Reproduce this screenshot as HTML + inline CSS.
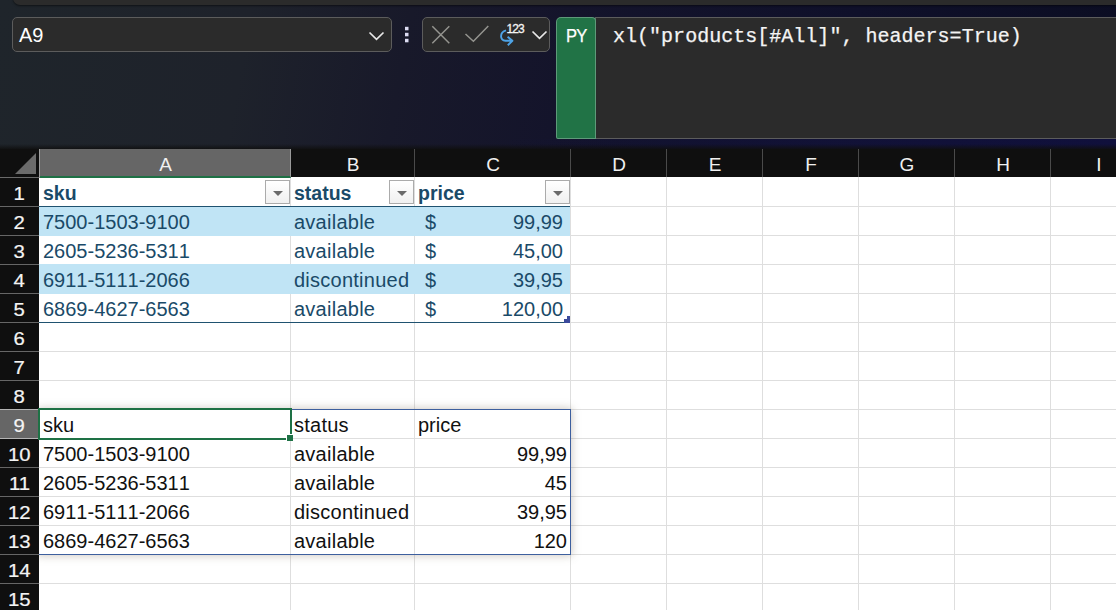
<!DOCTYPE html>
<html><head><meta charset="utf-8"><title>Excel</title>
<style>
html,body{margin:0;padding:0;}
body{width:1116px;height:610px;overflow:hidden;position:relative;background:#1a1c2a;font-family:"Liberation Sans",sans-serif;}
#bg{position:absolute;left:0;top:0;width:1116px;height:178px;background:linear-gradient(100deg,#1f252b 0%,#1e222b 22%,#18192a 36%,#14142b 50%,#0f102a 75%,#0b0d22 100%);}
#strip{position:absolute;left:0;top:139px;width:1116px;height:10px;background:linear-gradient(rgba(15,15,15,0) 50%,rgba(15,15,15,.85) 100%),linear-gradient(90deg,rgba(18,18,56,0) 0%,rgba(18,18,56,0) 45%,rgba(18,18,56,.9) 75%,#10103c 100%);}
#ribbon{position:absolute;left:13px;top:-20px;width:1200px;height:25px;background:#2b2b2b;border-radius:0 0 0 7px;box-shadow:0 1px 2px rgba(0,0,0,.5);}
.box{position:absolute;box-sizing:border-box;border:1px solid #5c5c5c;background:#2b2b2b;border-radius:5px;}
#namebox{left:12px;top:17px;width:380px;height:35px;}
#namebox span{position:absolute;left:6px;top:6px;font-size:20px;color:#fff;line-height:22px;}
#btns{left:422px;top:17px;width:128px;height:35px;}
#fx{left:595px;top:17px;width:600px;height:122px;border-radius:0;}
#py{position:absolute;box-sizing:border-box;left:556px;top:17px;width:40px;height:122px;background:#217346;border:1px solid rgba(255,255,255,.28);border-radius:5px 4px 0 2px;}
#py span{position:absolute;left:9px;top:7px;font-size:18px;color:#fff;line-height:22px;letter-spacing:-1px;transform:scaleX(.92);transform-origin:0 0;-webkit-text-stroke:0.25px #fff}
#code{position:absolute;left:17px;top:7px;font-family:"Liberation Mono",monospace;font-size:20px;line-height:24px;color:#f4f4f4;white-space:pre;letter-spacing:0.02px;-webkit-text-stroke:0.25px #f4f4f4}
svg{position:absolute;overflow:visible;}
#grid{position:absolute;left:39px;top:177px;width:1077px;height:433px;background:#fff;}
.hl{position:absolute;left:39px;width:1077px;height:1px;background:#dedede;}
.vl{position:absolute;top:177px;width:1px;height:433px;background:#dedede;}
#colhdr{position:absolute;left:0;top:149px;width:1116px;height:28px;background:#0f0f0f;}
.ch{position:absolute;top:149px;height:28px;box-sizing:border-box;padding-left:2px;border-right:1px solid #4a4a4a;color:#f0f0f0;font-size:19px;line-height:32px;text-align:center;}
#rowhdr{z-index:2;position:absolute;left:0;top:177px;width:39px;height:433px;background:#0f0f0f;}
.rh{z-index:2;position:absolute;left:0;width:39px;height:29px;box-sizing:border-box;border-bottom:1px solid #666;color:#f4f4f4;font-size:18.5px;line-height:31px;text-align:center;}
.rh span{display:inline-block;transform:scaleX(1.1);-webkit-text-stroke:0.2px #f4f4f4}
.c{font-kerning:none;position:absolute;height:29px;line-height:31px;font-size:20px;white-space:nowrap;color:#111;}
.t{color:#1a4a68;}
.b{font-weight:bold;font-size:19.5px;letter-spacing:0 !important}
.cb{letter-spacing:0.25px;}
.r{text-align:right;}
.band{position:absolute;left:39px;width:531px;height:29.5px;background:#c0e4f5;}
.fb{position:absolute;top:180px;width:25px;height:24px;box-sizing:border-box;border:1px solid #ababab;background:linear-gradient(#ffffff,#f0f0f0);}
.fb i{position:absolute;left:6.5px;top:9.5px;width:0;height:0;border-left:5px solid transparent;border-right:5px solid transparent;border-top:5px solid #6a6a6a;}
</style></head><body>
<div id="bg"></div>
<div id="ribbon"></div>
<div id="strip"></div>
<div class="box" id="namebox"><span>A9</span></div>
<div class="box" id="btns"></div>
<span style="position:absolute;left:506.5px;top:22px;font-size:12px;line-height:14px;color:#f4f4f4;letter-spacing:-0.9px;-webkit-text-stroke:0.3px #f4f4f4">123</span>
<svg style="left:0;top:0" width="600" height="60" viewBox="0 0 600 60">
<path d="M369.5 32.5 L376.5 39.3 L383.5 32.5" fill="none" stroke="#e8e8e8" stroke-width="1.7"/>
<rect x="405" y="26.8" width="3.5" height="3.5" fill="#dcdcf2"/><rect x="405" y="32.8" width="3.5" height="3.5" fill="#dcdcf2"/><rect x="405" y="38.8" width="3.5" height="3.5" fill="#dcdcf2"/>
<path d="M432.3 26.2 L449.3 43.2 M449.3 26.2 L432.3 43.2" fill="none" stroke="#94948f" stroke-width="1.5"/>
<path d="M465.5 34 L473.4 41.2 L488.3 26" fill="none" stroke="#94948f" stroke-width="1.5"/>
<path d="M506 30.3 C499.5 32 499.5 40.8 505.5 40.8 L512 40.8 M507.6 36.8 L512.4 40.8 L507.8 45.2" fill="none" stroke="#4ea3e6" stroke-width="1.9" stroke-linejoin="round"/>
<path d="M532.5 31.5 L539.5 38.3 L546.5 31.5" fill="none" stroke="#e8e8e8" stroke-width="1.7"/>
</svg>
<div class="box" id="fx"><div id="code">xl("products[#All]", headers=True)</div></div>
<div id="py"><span>PY</span></div>
<div id="grid"></div>

<div class="hl" style="top:206px"></div>
<div class="hl" style="top:235px"></div>
<div class="hl" style="top:264px"></div>
<div class="hl" style="top:293px"></div>
<div class="hl" style="top:322px"></div>
<div class="hl" style="top:351px"></div>
<div class="hl" style="top:380px"></div>
<div class="hl" style="top:409px"></div>
<div class="hl" style="top:438px"></div>
<div class="hl" style="top:467px"></div>
<div class="hl" style="top:496px"></div>
<div class="hl" style="top:525px"></div>
<div class="hl" style="top:554px"></div>
<div class="hl" style="top:583px"></div>
<div class="hl" style="top:612px"></div>
<div class="vl" style="left:290px"></div>
<div class="vl" style="left:414px"></div>
<div class="vl" style="left:570px"></div>
<div class="vl" style="left:666px"></div>
<div class="vl" style="left:762px"></div>
<div class="vl" style="left:858px"></div>
<div class="vl" style="left:954px"></div>
<div class="vl" style="left:1050px"></div>
<div class="band" style="top:206px"></div>
<div class="band" style="top:264px"></div>
<div id="colhdr"></div>
<svg style="left:15px;top:153px" width="21" height="21" viewBox="0 0 21 21"><path d="M21 0 L21 21 L0 21 Z" fill="#6b6b6b"/></svg>
<div class="ch" style="left:0;width:40px;border-right:1px solid #a0a0a0;height:29px;border-bottom:1px solid #6a6a6a;z-index:3"></div>
<div class="ch" style="left:39px;width:252px;background:#666;border-bottom:2px solid #1e7145;border-right:1px solid #9a9a9a;height:29px;line-height:32px;">A</div>
<div class="ch" style="left:290px;width:125px;">B</div>
<div class="ch" style="left:414px;width:157px;">C</div>
<div class="ch" style="left:570px;width:97px;">D</div>
<div class="ch" style="left:666px;width:97px;">E</div>
<div class="ch" style="left:762px;width:97px;">F</div>
<div class="ch" style="left:858px;width:97px;">G</div>
<div class="ch" style="left:954px;width:97px;">H</div>
<div class="ch" style="left:1050px;width:97px;">I</div>
<div id="rowhdr"></div>
<div class="rh" style="top:178px;"><span>1</span></div>
<div class="rh" style="top:207px;"><span>2</span></div>
<div class="rh" style="top:236px;"><span>3</span></div>
<div class="rh" style="top:265px;"><span>4</span></div>
<div class="rh" style="top:294px;"><span>5</span></div>
<div class="rh" style="top:323px;"><span>6</span></div>
<div class="rh" style="top:352px;"><span>7</span></div>
<div class="rh" style="top:381px;border-bottom:1px solid #b4b4b4;"><span>8</span></div>
<div class="rh" style="top:410px;background:#666;border-bottom:1px solid #b4b4b4;"><span>9</span></div>
<div class="rh" style="top:439px;"><span>10</span></div>
<div class="rh" style="top:468px;"><span>11</span></div>
<div class="rh" style="top:497px;"><span>12</span></div>
<div class="rh" style="top:526px;"><span>13</span></div>
<div class="rh" style="top:555px;"><span>14</span></div>
<div class="rh" style="top:584px;"><span>15</span></div>
<div class="c t b" style="left:43px;top:178px">sku</div>
<div class="c t b" style="left:294px;top:178px">status</div>
<div class="c t b" style="left:418px;top:178px">price</div>
<div class="c t" style="left:43px;top:207px">7500-1503-9100</div>
<div class="c t cb" style="left:294px;top:207px">available</div>
<div class="c r t" style="left:414px;width:149px;top:207px">99,99</div>
<div class="c t" style="left:425px;top:207px">$</div>
<div class="c t" style="left:43px;top:236px">2605-5236-5311</div>
<div class="c t cb" style="left:294px;top:236px">available</div>
<div class="c r t" style="left:414px;width:149px;top:236px">45,00</div>
<div class="c t" style="left:425px;top:236px">$</div>
<div class="c t" style="left:43px;top:265px">6911-5111-2066</div>
<div class="c t cb" style="left:294px;top:265px">discontinued</div>
<div class="c r t" style="left:414px;width:149px;top:265px">39,95</div>
<div class="c t" style="left:425px;top:265px">$</div>
<div class="c t" style="left:43px;top:294px">6869-4627-6563</div>
<div class="c t cb" style="left:294px;top:294px">available</div>
<div class="c r t" style="left:414px;width:149px;top:294px">120,00</div>
<div class="c t" style="left:425px;top:294px">$</div>
<div class="c " style="left:43px;top:410px">sku</div>
<div class="c cb" style="left:294px;top:410px">status</div>
<div class="c " style="left:418px;top:410px">price</div>
<div class="c " style="left:43px;top:439px">7500-1503-9100</div>
<div class="c cb" style="left:294px;top:439px">available</div>
<div class="c r " style="left:414px;width:153px;top:439px">99,99</div>
<div class="c " style="left:43px;top:468px">2605-5236-5311</div>
<div class="c cb" style="left:294px;top:468px">available</div>
<div class="c r " style="left:414px;width:153px;top:468px">45</div>
<div class="c " style="left:43px;top:497px">6911-5111-2066</div>
<div class="c cb" style="left:294px;top:497px">discontinued</div>
<div class="c r " style="left:414px;width:153px;top:497px">39,95</div>
<div class="c " style="left:43px;top:526px">6869-4627-6563</div>
<div class="c cb" style="left:294px;top:526px">available</div>
<div class="c r " style="left:414px;width:153px;top:526px">120</div>
<div class="fb" style="left:265px"><i></i></div>
<div class="fb" style="left:389px"><i></i></div>
<div class="fb" style="left:545px"><i></i></div>
<div style="position:absolute;left:39px;top:206px;width:531px;height:1px;background:#1f5270"></div>
<div style="position:absolute;left:39px;top:322px;width:531px;height:1px;background:#1f5270"></div>
<svg style="left:564px;top:316px" width="7" height="7" viewBox="0 0 7 7"><path d="M3 0 H6 V7 H0 V3 H3 Z" fill="#3b4a9c"/></svg>
<div style="position:absolute;left:38px;top:409px;width:533px;height:146px;box-sizing:border-box;border:1px solid #3d5f9e;box-shadow:0 0 8px 1px rgba(120,110,90,.35);"></div>
<div style="position:absolute;z-index:3;left:38px;top:408px;width:254px;height:32px;box-sizing:border-box;border:2px solid #1e7145;"></div>
<div style="position:absolute;z-index:3;left:286px;top:434px;width:7px;height:7px;box-sizing:border-box;background:#1e7145;border-left:1px solid #fff;border-top:1px solid #fff;"></div>
</body></html>
